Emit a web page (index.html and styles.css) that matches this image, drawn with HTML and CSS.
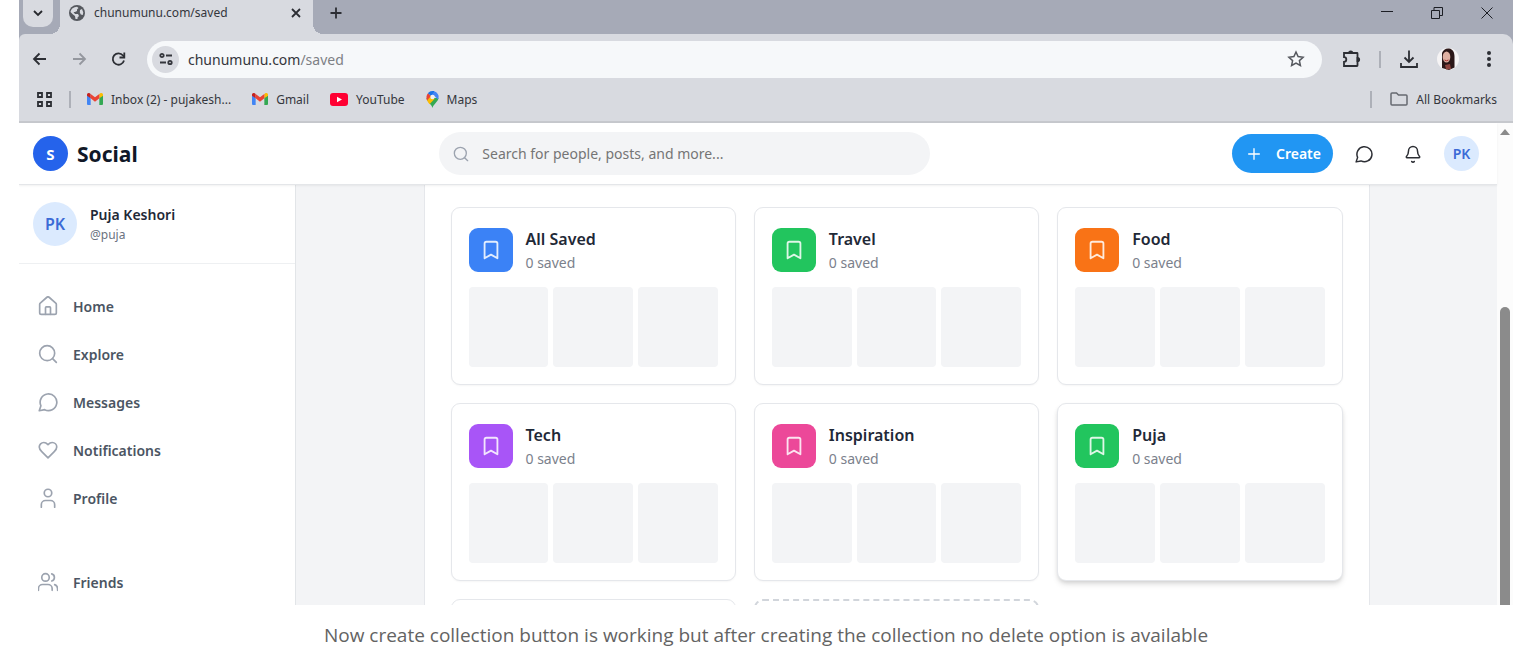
FILE: index.html
```html
<!DOCTYPE html>
<html lang="en">
<head>
<meta charset="utf-8">
<title>Saved collections</title>
<link rel="stylesheet" href="styles.css">
</head>
<body>
<svg class="defs" aria-hidden="true">
  <symbol id="i-bookmark" viewBox="0 0 24 24"><path d="m19 21-7-4-7 4V5a2 2 0 0 1 2-2h10a2 2 0 0 1 2 2z"/></symbol>
  <symbol id="i-search" viewBox="0 0 24 24"><circle cx="11" cy="11" r="9"/><path d="m22 22-4.500-4.500"/></symbol>
  <symbol id="i-message" viewBox="0 0 24 24"><path d="M8 21.200A10 10 0 1 0 3.500 16.500L1.500 22.500Z"/></symbol>
  <symbol id="i-gmail" viewBox="0 0 24 18">
    <path fill="#4285f4" d="M0 3v13.500A1.500 1.500 0 0 0 1.500 18H5.500V7z"/>
    <path fill="#34a853" d="M24 3v13.500a1.500 1.500 0 0 1-1.500 1.500H18.500V7z"/>
    <path fill="#fbbc04" d="M18.500 1.500V8L24 4V2.500c0-2.400-2.600-3.100-4-2z"/>
    <path fill="#c5221f" d="M5.500 1.500V8L0 4V2.500C0 .1 2.600-.6 4 .5z"/>
    <path fill="#ea4335" d="M5.500 8V1.600L12 6.500l6.500-4.900V8L12 13z"/>
  </symbol>
</svg>
<figure class="figure">
  <div class="browser">
    <div class="tabstrip">
      <button class="tab-search" aria-label="Search tabs"><svg class="line s12" viewBox="0 0 12 12"><path d="m2 3 4 4 4-4"/></svg></button>
      <div class="tab">
        <svg class="globe" viewBox="0 0 16 16"><circle cx="8" cy="8" r="8" fill="#55585e"/><path fill="#d8dae0" d="M1.500 7C2 4 4.500 1.800 8 1.700L9.500 3 8 4.500v1.500l-2 1H4.500l1.500 2H9l1 2-1.500 1.500V14L6.500 14l-.5-3-2-1.500zM11 5l2-1 1.300 3.500-.5 2.500-2-.5-1-2z"/></svg>
        <span class="tab-title">chunumunu.com/saved</span>
        <button class="plain" aria-label="Close tab"><svg class="line s12" viewBox="0 0 12 12"><path d="m2 2 8 8M10 2l-8 8"/></svg></button>
      </div>
      <button class="plain new-tab" aria-label="New tab"><svg class="line s14" viewBox="0 0 14 14"><path d="M7 1.500v11M1.500 7h11"/></svg></button>
      <div class="window-controls">
        <button class="plain" aria-label="Minimize"><svg class="thin s14" viewBox="0 0 14 14"><path d="M1 5.500h12"/></svg></button>
        <button class="plain" aria-label="Restore"><svg class="thin s14" viewBox="0 0 14 14"><path d="M1.500 4.500h8v8h-8zM4 4.500v-3h8.500v8H9.500"/></svg></button>
        <button class="plain" aria-label="Close"><svg class="thin s14" viewBox="0 0 14 14"><path d="m1.500 1.500 11 11M12.500 1.500l-11 11"/></svg></button>
      </div>
    </div>

    <div class="toolbar">
      <button class="plain" aria-label="Back"><svg class="line s16" viewBox="0 0 16 16"><path d="M14 8H2M7.500 2.500 2 8l5.500 5.500"/></svg></button>
      <button class="plain muted" aria-label="Forward"><svg class="line s16" viewBox="0 0 16 16"><path d="M2 8h12M8.500 2.500 14 8l-5.500 5.500"/></svg></button>
      <button class="plain" aria-label="Reload"><svg class="line s16" viewBox="0 0 16 16"><path d="M14 9.500A5.700 5.700 0 1 1 13 4.500L14.500 6"/><path d="M14.300 1.500v5H9.500"/></svg></button>
      <div class="address">
        <button class="site-info" aria-label="Site information"><svg class="line s16" viewBox="0 0 16 16"><circle cx="4" cy="4.500" r="1.700"/><path d="M8 4.500h6M2 11.500h6"/><circle cx="12" cy="11.500" r="1.700"/></svg></button>
        <div class="url" role="textbox" aria-label="Address" contenteditable="true" spellcheck="false">chunumunu.com<span class="path">/saved</span></div>
        <button class="plain" aria-label="Bookmark this page"><svg class="star" viewBox="0 0 18 18"><path d="m9 2 2.100 4.600 5 .6-3.700 3.400 1 4.900L9 13l-4.400 2.500 1-4.900L1.900 7.200l5-.6z"/></svg></button>
      </div>
      <div class="tools">
        <button class="plain" aria-label="Extensions"><svg class="line s20" viewBox="0 0 20 20"><path d="M3 4h13a.5.5 0 0 1 .5.5v12a.5.5 0 0 1-.5.5H3v-4.200a2.300 2.300 0 0 0 0-4.600z"/><path class="fill" d="M8 4a1.700 1.700 0 0 1 3.400 0zM16.500 8.800a1.700 1.700 0 0 1 0 3.400z"/></svg></button>
        <span class="rule"></span>
        <button class="plain" aria-label="Downloads"><svg class="line s20" viewBox="0 0 20 20"><path d="M10 1.500v11M5.500 8.500 10 13l4.500-4.500M2 14v4h16v-4"/></svg></button>
        <button class="plain" aria-label="Account"><svg class="s22" viewBox="0 0 22 22"><circle cx="11" cy="11" r="11" fill="#f5f3f4"/><path fill="#2b1718" d="M5 20V5c1-3 4-5 7-4.500 4 .5 5.500 4 5.500 8v11L12 22z"/><ellipse cx="9.500" cy="9" rx="3.800" ry="5.500" fill="#dfb0a2"/><path d="M7.500 12q2 1.500 4 0" stroke="#a33" fill="none"/><path fill="#8e443f" d="m8 17 5-1 1 5-5 .5z"/></svg></button>
        <button class="plain more" aria-label="Menu"><svg class="dots" viewBox="0 0 6 18"><circle cx="3" cy="3" r="2"/><circle cx="3" cy="9" r="2"/><circle cx="3" cy="15" r="2"/></svg></button>
      </div>
    </div>

    <nav class="bookmarks" aria-label="Bookmarks">
      <button class="plain" aria-label="Apps"><svg class="line apps" viewBox="0 0 17 17"><path d="M2 2h4v4H2zM11 2h4v4H11zM2 11h4v4H2zM11 11h4v4H11z"/></svg></button>
      <span class="rule"></span>
      <div class="links">
        <a href="#"><svg class="gmail"><use href="#i-gmail"/></svg>Inbox (2) - pujakesh...</a>
        <a href="#"><svg class="gmail"><use href="#i-gmail"/></svg>Gmail</a>
        <a href="#"><svg class="youtube" viewBox="0 0 18 13"><rect width="18" height="13" rx="3" fill="#f03"/><path fill="#fff" d="m7 3.800 5 2.700-5 2.700z"/></svg>YouTube</a>
        <a href="#"><svg class="pin" viewBox="0 0 13 17"><path fill="#34a853" d="M6.500 17C5.500 13 1 11 .5 7h12c-.5 4-5 6-6 10z"/><path fill="#fbbc04" d="M.8 8.500 5 4l3.500 4-5 5.200C2.300 11.500 1.200 10 .8 8.500z"/><path fill="#4285f4" d="M2 2.500C5 -1 11-.5 12.500 4.500c.3 1.500 0 3-.5 4L8 4.500z"/><path fill="#ea4335" d="M2 2.300 5 5 1 9.500C0 7 .3 4 2 2.300z"/><path fill="#1a73e8" d="M2 2.300C3.500.5 6-.5 8.500.3L5 5z"/><circle cx="6.500" cy="6" r="2.200" fill="#eef0f4"/></svg>Maps</a>
      </div>
      <span class="rule push"></span>
      <a href="#"><svg class="folder" viewBox="0 0 18 14"><path d="M1 2a1 1 0 0 1 1-1h4.500l2 2H16a1 1 0 0 1 1 1v8a1 1 0 0 1-1 1H2a1 1 0 0 1-1-1z"/></svg>All Bookmarks</a>
    </nav>

    <div class="viewport">
      <div class="app">
        <header class="header">
          <a class="brand" href="#"><span class="brand-mark">S</span>Social</a>
          <label class="search"><svg class="icon s16"><use href="#i-search"/></svg><input type="search" aria-label="Search" placeholder="Search for people, posts, and more..."></label>
          <div class="actions">
            <button class="create"><svg class="icon s16" viewBox="0 0 24 24"><path d="M12 4v16M4 12h16"/></svg>Create</button>
            <button class="plain" aria-label="Messages"><svg class="icon s18"><use href="#i-message"/></svg></button>
            <button class="plain" aria-label="Notifications"><svg class="icon s18" viewBox="0 0 24 24"><path d="M10.300 22a2 2 0 0 0 3.400 0M3.300 15.300A1 1 0 0 0 4 17h16a1 1 0 0 0 .7-1.700C19.400 14 18 12.500 18 8A6 6 0 0 0 6 8c0 4.500-1.400 6-2.700 7.300"/></svg></button>
            <button class="avatar small" aria-label="Account PK">PK</button>
          </div>
        </header>
        <div class="body">
          <aside class="sidebar">
            <div class="profile">
              <span class="avatar">PK</span>
              <div><div class="name">Puja Keshori</div><div class="handle">@puja</div></div>
            </div>
            <nav class="menu" aria-label="Main">
              <a href="#"><svg class="icon s20" viewBox="0 0 24 24"><path d="M15 22v-8a1 1 0 0 0-1-1h-4a1 1 0 0 0-1 1v8"/><path d="M2 10a2 2 0 0 1 .7-1.500l8-7a2 2 0 0 1 2.600 0l8 7A2 2 0 0 1 22 10v10a2 2 0 0 1-2 2H4a2 2 0 0 1-2-2z"/></svg>Home</a>
              <a href="#"><svg class="icon s20"><use href="#i-search"/></svg>Explore</a>
              <a href="#"><svg class="icon s20"><use href="#i-message"/></svg>Messages</a>
              <a href="#"><svg class="icon s20" viewBox="0 0 24 24"><path d="M19.500 14c1.500-1.500 3-3.200 3-5.500A5.500 5.500 0 0 0 17 3c-1.800 0-3 .5-5 2.500C10 3.500 8.800 3 7 3a5.500 5.500 0 0 0-5.500 5.500c0 2.300 1.500 4 3 5.500L12 21.500Z"/></svg>Notifications</a>
              <a href="#"><svg class="icon s20" viewBox="0 0 24 24"><path d="M20 23v-3a5 5 0 0 0-5-5H9a5 5 0 0 0-5 5v3"/><circle cx="12" cy="6" r="4.500"/></svg>Profile</a>
            </nav>
            <nav class="menu" aria-label="More">
              <a href="#"><svg class="icon s20" viewBox="0 0 24 24"><path d="M17 22v-2a5 5 0 0 0-5-5H5.500a5 5 0 0 0-5 5v2M23.500 22v-2a5 5 0 0 0-3.500-4.800M16.500 2.200a4.500 4.500 0 0 1 0 8.600"/><circle cx="9" cy="6.500" r="4.500"/></svg>Friends</a>
            </nav>
          </aside>
          <main class="main">
            <section class="panel">
              <article class="card"><div class="card-head"><span class="badge blue"><svg class="icon s22"><use href="#i-bookmark"/></svg></span><div><h3>All Saved</h3><p>0 saved</p></div></div><div class="tiles"><i></i><i></i><i></i></div></article>
              <article class="card"><div class="card-head"><span class="badge green"><svg class="icon s22"><use href="#i-bookmark"/></svg></span><div><h3>Travel</h3><p>0 saved</p></div></div><div class="tiles"><i></i><i></i><i></i></div></article>
              <article class="card"><div class="card-head"><span class="badge orange"><svg class="icon s22"><use href="#i-bookmark"/></svg></span><div><h3>Food</h3><p>0 saved</p></div></div><div class="tiles"><i></i><i></i><i></i></div></article>
              <article class="card"><div class="card-head"><span class="badge purple"><svg class="icon s22"><use href="#i-bookmark"/></svg></span><div><h3>Tech</h3><p>0 saved</p></div></div><div class="tiles"><i></i><i></i><i></i></div></article>
              <article class="card"><div class="card-head"><span class="badge pink"><svg class="icon s22"><use href="#i-bookmark"/></svg></span><div><h3>Inspiration</h3><p>0 saved</p></div></div><div class="tiles"><i></i><i></i><i></i></div></article>
              <article class="card raised"><div class="card-head"><span class="badge green"><svg class="icon s22"><use href="#i-bookmark"/></svg></span><div><h3>Puja</h3><p>0 saved</p></div></div><div class="tiles"><i></i><i></i><i></i></div></article>
              <article class="card"></article>
              <button class="card dashed" aria-label="Create collection"></button>
            </section>
          </main>
        </div>
      </div>
      <div class="scrollbar"><span class="arrow"></span><span class="thumb"></span></div>
    </div>
  </div>
  <figcaption>Now create collection button is working but after creating the collection no delete option is available</figcaption>
</figure>
</body>
</html>
```

FILE: styles.css
```css
* { box-sizing: border-box; }
body { margin: 0; background: #fff; font-family: "Noto Sans", "Open Sans", sans-serif; color: #1f2937; }
.defs { position: absolute; width: 0; height: 0; }
svg { display: block; flex: none; }
a { color: inherit; text-decoration: none; }
button { font: inherit; }
.plain { display: flex; padding: 0; border: 0; background: none; color: #2c2e34; }
.muted { color: #94979e; }

.s12 { width: 12px; height: 12px; }
.s14 { width: 14px; height: 14px; }
.s16 { width: 16px; height: 16px; }
.s18 { width: 18px; height: 18px; }
.s20 { width: 20px; height: 20px; }
.s22 { width: 22px; height: 22px; }
.line { fill: none; stroke: currentColor; stroke-width: 1.8; }
.thin { fill: none; stroke: #1c1e24; stroke-width: 1; }
.fill { fill: currentColor; }
.icon { fill: none; stroke: currentColor; stroke-width: 2; stroke-linecap: round; stroke-linejoin: round; }

.figure { display: flex; flex-direction: column; height: 100vh; margin: 0; }
.figure figcaption { height: 60px; padding: 0 15px 0 19px; line-height: 60px; font-family: "Open Sans", "Noto Sans", sans-serif; font-size: 19px; text-align: center; color: #636363; }
.browser { display: flex; flex: 1; flex-direction: column; min-height: 0; margin: 0 15px 0 19px; overflow: hidden; background: #a6aab7; }

.tabstrip { display: flex; flex: none; height: 34px; padding-left: 4px; }
.tab-search { display: flex; align-items: center; justify-content: center; width: 30px; height: 27px; padding: 0; border: 0; border-radius: 0 0 10px 10px; background: #d8dae0; color: #26282d; }
.tab { position: relative; display: flex; align-items: center; width: 253px; margin-left: 7px; padding: 0 11px 9px 9px; background: #d8dae0; }
.tab::before, .tab::after { content: ""; position: absolute; bottom: 0; width: 10px; height: 10px; }
.tab::before { right: 100%; background: radial-gradient(circle at 0 0, transparent 10px, #d8dae0 10px); }
.tab::after { left: 100%; background: radial-gradient(circle at 100% 0, transparent 10px, #d8dae0 10px); }
.globe { width: 16px; height: 16px; }
.tab-title { flex: 1; padding-left: 9px; font-size: 12px; color: #34363c; }
.new-tab { align-items: center; padding: 0 0 9px 16px; }
.window-controls { display: flex; align-items: center; gap: 36px; margin-left: auto; padding: 0 19px 9px 0; }

.toolbar { display: flex; flex: none; align-items: center; height: 50px; padding: 0 21px 0 13px; gap: 23px; border-radius: 6px 10px 0 0; background: #d8dae0; }
.address { display: flex; flex: 1; align-items: center; height: 37px; margin-left: -2px; padding: 0 17px 0 5px; border-radius: 19px; background: #f6f8fa; }
.site-info { display: flex; align-items: center; justify-content: center; width: 27px; height: 27px; padding: 0; border: 0; border-radius: 50%; background: #d8dae0; color: #34363c; }
.url { flex: 1; padding-left: 9px; font-size: 14px; color: #34363c; outline: 0; }
.path { color: #7d8085; }
.star { width: 18px; height: 18px; fill: none; stroke: #55585e; stroke-width: 1.5; }
.tools { display: flex; align-items: center; gap: 18px; margin-left: -4px; }
.more { padding-left: 9px; }
.rule { width: 2px; height: 17px; background: #adb0b8; }
.dots { width: 6px; height: 18px; fill: #2c2e34; }

.bookmarks { display: flex; flex: none; align-items: center; gap: 16px; height: 39px; padding: 0 16px 7px 17px; border-bottom: 2px solid #c6c8cd; background: #d8dae0; font-size: 12px; color: #34363c; }
.bookmarks a { display: flex; align-items: center; gap: 8px; }
.links { display: flex; align-items: center; gap: 21px; }
.apps { width: 17px; height: 17px; }
.gmail { width: 16px; height: 12px; }
.youtube { width: 18px; height: 13px; }
.pin { width: 13px; height: 17px; }
.folder { width: 18px; height: 14px; fill: none; stroke: #666970; stroke-width: 1.5; }
.push { margin: 0 2px 0 auto; }

.viewport { display: flex; flex: 1; min-height: 0; background: #fff; }
.app { display: flex; flex: 1; flex-direction: column; min-width: 0; }
.scrollbar { display: flex; flex-direction: column; align-items: center; width: 16px; background: #fcfcfc; }
.arrow { margin-top: 6px; border: 5px solid transparent; border-top: 0; border-bottom: 6px solid #8b8b8b; }
.thumb { flex: 1; width: 10px; margin-top: 172px; border-radius: 5px 5px 0 0; background: #8b8b8b; }

.header { position: relative; display: flex; flex: none; align-items: center; justify-content: space-between; height: 62px; padding: 0 18px 0 14px; border-bottom: 1px solid #e4e6e9; background: #fff; box-shadow: 0 1px 2px rgba(0, 0, 0, .06); }
.brand { display: flex; align-items: center; gap: 9px; font-size: 21px; font-weight: 700; color: #111827; }
.brand-mark { display: flex; align-items: center; justify-content: center; width: 35px; height: 35px; border-radius: 50%; background: #2563eb; font-size: 15px; color: #fff; }
.search { display: flex; align-items: center; gap: 13px; width: 491px; height: 43px; padding: 0 14px; border-radius: 22px; background: #f3f4f6; color: #9ca3af; }
.search input { flex: 1; min-width: 0; padding: 0; border: 0; outline: 0; background: none; font: inherit; font-size: 14px; color: #374151; }
.search input::placeholder { color: #757575; }
.actions { display: flex; align-items: center; }
.create { display: flex; align-items: center; gap: 14px; height: 39px; margin-right: 22px; padding: 0 12px 0 14px; border: 0; border-radius: 20px; background: #2196f3; font-size: 14px; font-weight: 600; color: #fff; }
.actions .plain { margin-right: 31px; }
.actions .plain + .avatar { margin-left: -9px; }
.avatar { display: flex; align-items: center; justify-content: center; width: 44px; height: 44px; padding: 0; border: 0; border-radius: 50%; background: #dbeafe; font-size: 16px; font-weight: 600; color: #3b6bd6; }
.avatar.small { width: 35px; height: 35px; font-size: 14px; }

.body { display: flex; flex: 1; min-height: 0; overflow: hidden; }
.sidebar { width: 277px; border-right: 1px solid #e2e5e8; background: #fff; }
.profile { display: flex; align-items: center; gap: 13px; height: 79px; padding-left: 14px; border-bottom: 1px solid #eef0f2; }
.name { font-size: 14px; line-height: 21px; font-weight: 600; }
.handle { font-size: 12px; line-height: 20px; color: #6b7280; }
.menu { display: flex; flex-direction: column; gap: 4px; padding: 20px 9px; }
.menu a { display: flex; align-items: center; gap: 15px; height: 44px; padding-left: 10px; font-size: 14px; font-weight: 600; color: #4b5563; }
.menu svg { color: #9ca3af; }

.main { display: flex; flex: 1; justify-content: center; background: #f3f4f6; }
.panel { display: grid; grid-template-columns: repeat(3, 1fr); align-content: start; gap: 18px; width: 100%; max-width: 946px; padding: 22px 26px; border: solid #e5e7eb; border-width: 0 1px; background: #fff; }
.card { min-height: 178px; padding: 18px 17px; border: 1px solid #e5e7eb; border-radius: 9px; background: #fff; box-shadow: 0 1px 2px rgba(0, 0, 0, .04); }
.raised { box-shadow: 0 4px 6px -1px rgba(0, 0, 0, .12), 0 2px 4px -1px rgba(0, 0, 0, .1); }
.dashed { border: 2px dashed #d1d5db; box-shadow: none; }
.card-head { display: flex; align-items: center; gap: 13px; margin-bottom: 13px; }
.card h3 { margin: 0; font-size: 16px; line-height: 26px; font-weight: 600; }
.card p { margin: 0; font-size: 14px; line-height: 22px; color: #7b818c; }
.badge { display: flex; align-items: center; justify-content: center; width: 44px; height: 44px; border-radius: 9px; color: rgba(255, 255, 255, .85); }
.blue { background: #3b82f6; }
.green { background: #22c55e; }
.orange { background: #f97316; }
.purple { background: #a855f7; }
.pink { background: #ec4899; }
.tiles { display: grid; grid-template-columns: repeat(3, 1fr); gap: 5px; }
.tiles i { aspect-ratio: 1; border-radius: 4px; background: #f3f4f6; }
```
